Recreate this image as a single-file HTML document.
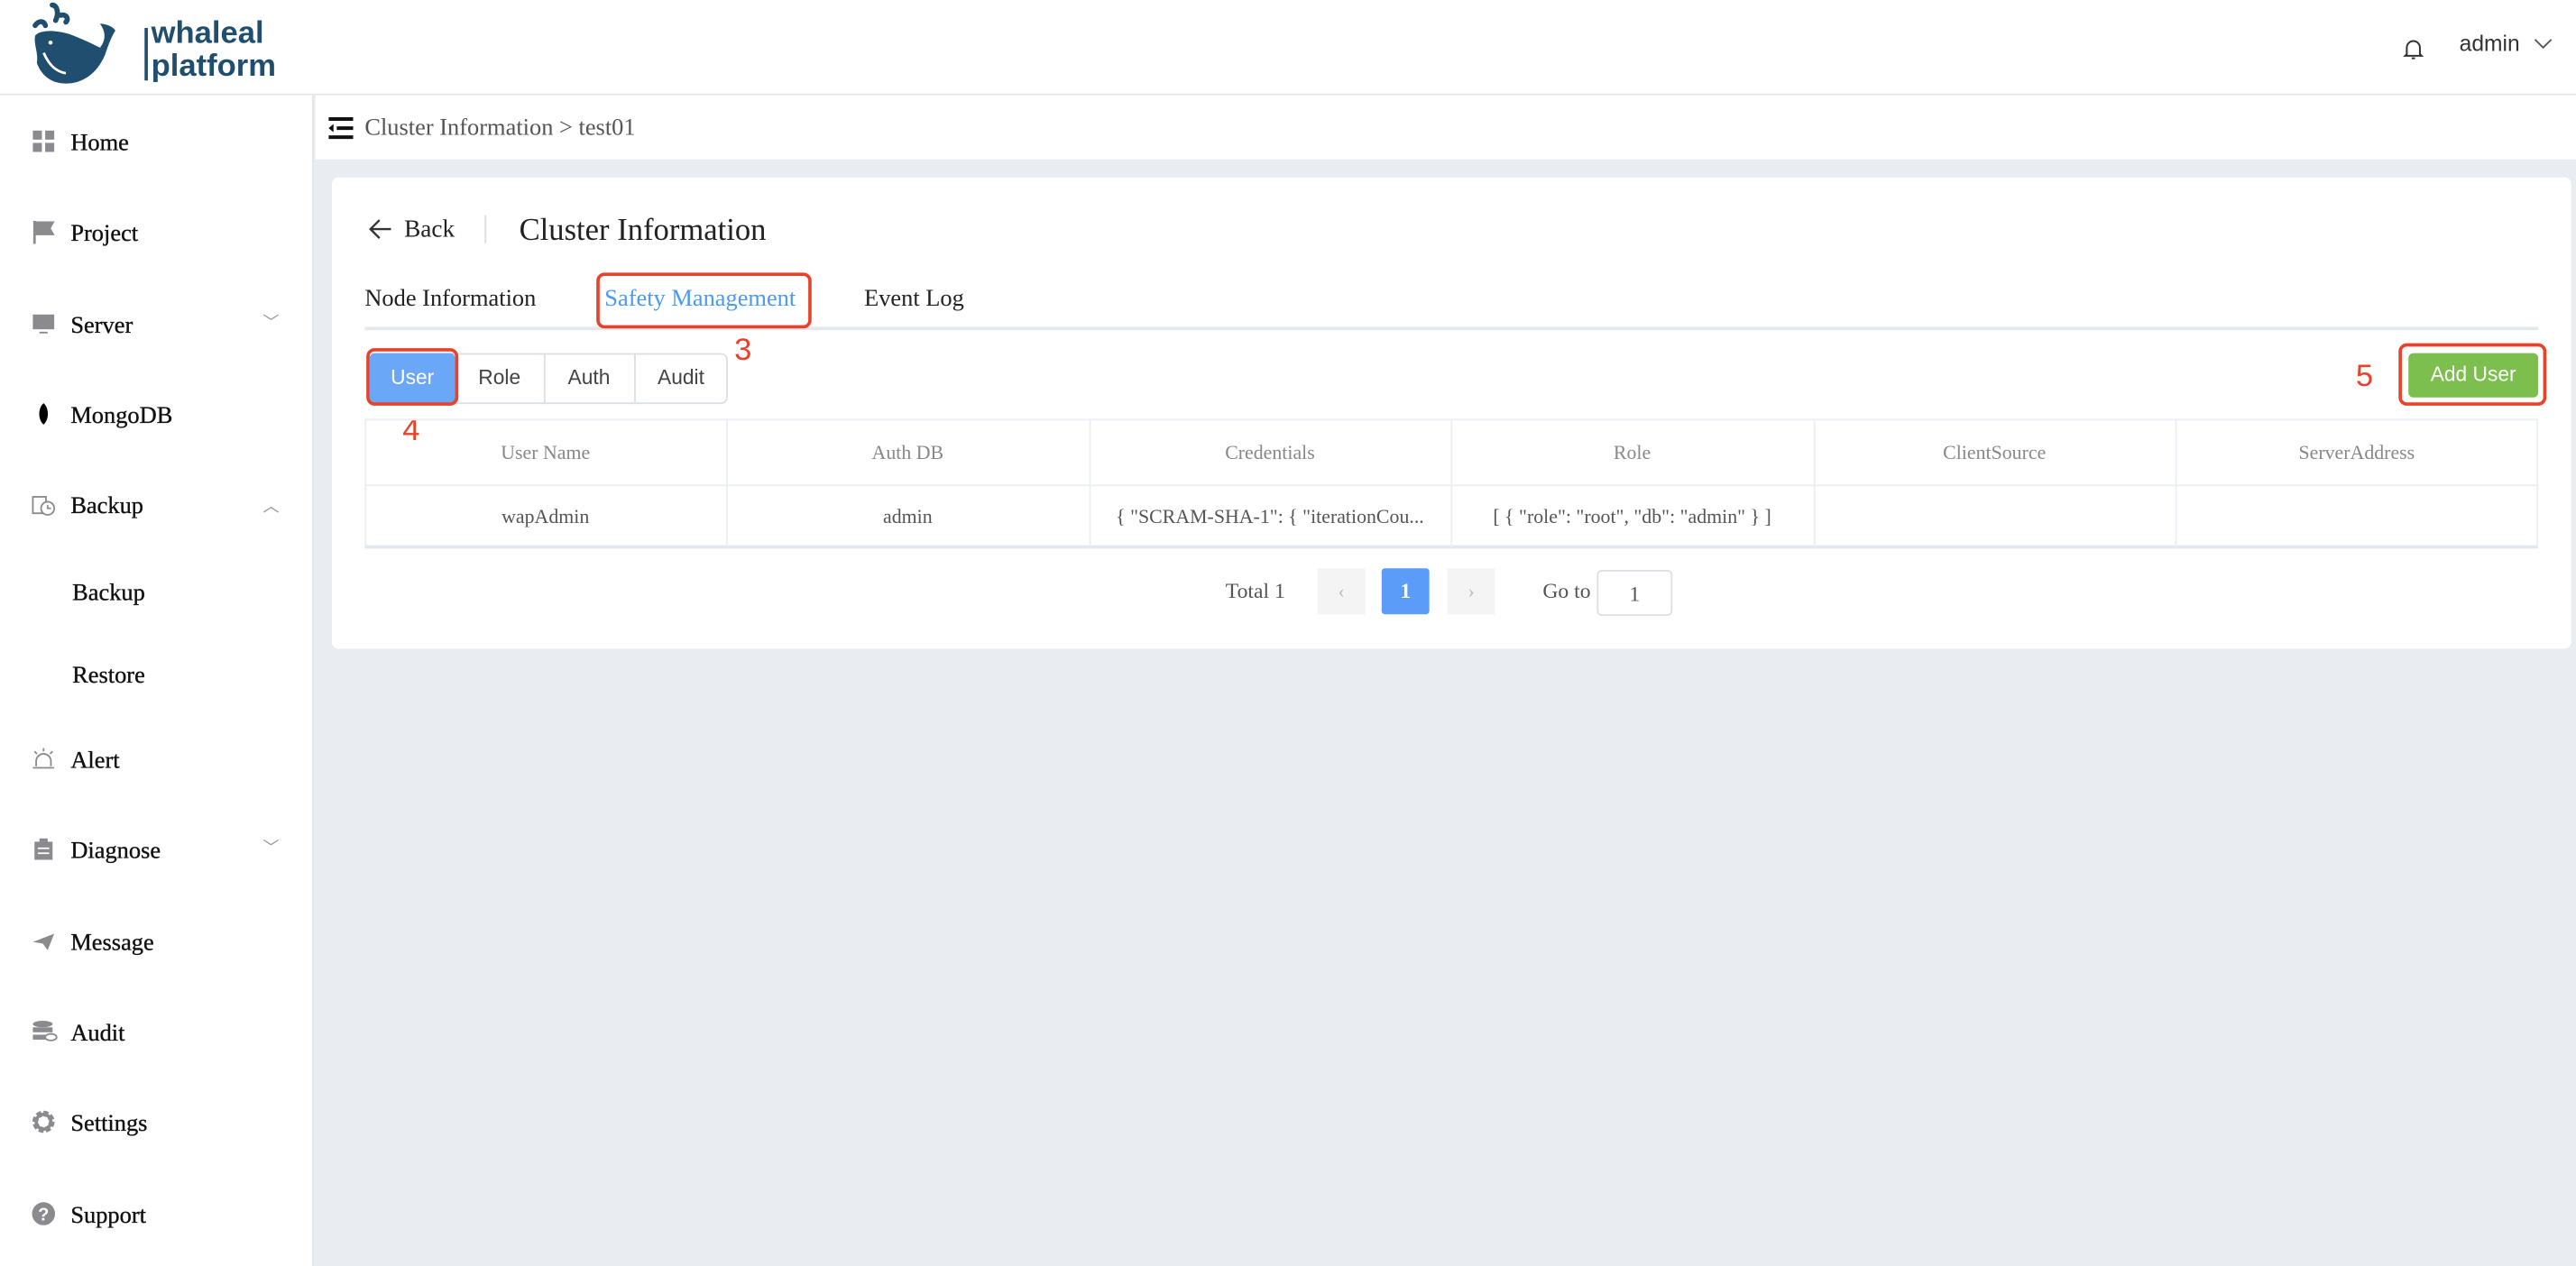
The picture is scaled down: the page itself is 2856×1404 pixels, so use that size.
<!DOCTYPE html>
<html><head><meta charset="utf-8"><style>
*{margin:0;padding:0;box-sizing:border-box}
html,body{width:2856px;height:1404px;overflow:hidden;background:#e9ecf0}
#w{position:absolute;left:0;top:0;width:1568px;height:771px;transform:scale(1.82143);transform-origin:0 0;font-family:"Liberation Serif",serif;color:#222}
.a{position:absolute;white-space:nowrap}
.side{position:absolute;left:0;top:58px;width:191px;height:713px;background:#fff;border-right:1px solid #e4e4e4}
.mi{position:absolute;left:43px;font-size:14.5px;color:#111;transform:translateY(-50%);margin-top:2px;-webkit-text-stroke:0.2px #111}
.ic{position:absolute;left:19px;width:15px;height:15px;transform:translateY(-50%)}
.chev{position:absolute;left:160px;font-size:10px;color:#999;transform:translateY(-50%)}
.sb{font-family:"Liberation Sans",sans-serif}
.cell{position:absolute;text-align:center;font-size:12px;transform:translateY(-50%);margin-top:1px}
.red{position:absolute;border:2.5px solid #e8432a;border-radius:5px}
.num{position:absolute;color:#e8432a;font-family:"Liberation Sans",sans-serif;font-size:19px}
</style></head><body><div id="w">
<!-- header -->
<div class="a" style="left:0;top:0;width:1568px;height:58px;background:#fff;border-bottom:1px solid #e6e6e6"></div>
<svg class="a" style="left:17px;top:1px" width="68" height="54" viewBox="0 0 65 52">
<path d="M4 14c2-3 5-3 6 0M14 2c3 0 4 5 2 9M19 8c3-1 5 2 3 4" stroke="#1f4e6e" stroke-width="3" fill="none" stroke-linecap="round"/>
<path d="M4 20c2-3 10-4 20-1 8 3 14 6 18 8 4-5 3-10 0-14 4 0 8 2 9 4-2 3-4 8-6 14-5 12-14 17-23 17-8 0-14-4-17-12C6 30 3 25 4 20z" fill="#1f4e6e"/>
<path d="M9 30c3 7 7 11 13 12" stroke="#fff" stroke-width="1.5" fill="none"/><circle cx="13" cy="24" r="1.2" fill="#fff"/>
</svg>
<div class="a" style="left:88px;top:17px;width:1.5px;height:32px;background:#1f4e6e"></div>
<div class="a sb" style="left:92px;top:11px;font-size:19px;font-weight:bold;color:#1f4e6e;line-height:20px">whaleal<br>platform</div>
<svg class="a" style="left:1462px;top:22px" width="14" height="15" viewBox="0 0 14 15"><path d="M3 11V7a4 4 0 018 0v4l1 1H2zM6 13.5h2" stroke="#333" stroke-width="1.1" fill="none"/></svg>
<div class="a sb" style="left:1497px;top:19px;font-size:13.5px;color:#333">admin</div>
<svg class="a" style="left:1542px;top:23px" width="12" height="8"><path d="M1 1l5 5 5-5" stroke="#555" fill="none"/></svg>
<!-- sidebar -->
<div class="side"></div>
<div class="ic" style="top:86px"><svg width="15" height="15"><rect x="1" y="1" width="5.5" height="5.5" fill="#8a8a8f"/><rect x="8.5" y="1" width="5.5" height="5.5" fill="#8a8a8f"/><rect x="1" y="8.5" width="5.5" height="5.5" fill="#8a8a8f"/><rect x="8.5" y="8.5" width="5.5" height="5.5" fill="#8a8a8f"/></svg></div><div class="mi" style="top:86px">Home</div>
<div class="ic" style="top:141px"><svg width="15" height="15"><path d="M2 1v14M2 2h11l-2 3.5 2 3.5H2" fill="#8a8a8f" stroke="#8a8a8f" stroke-width="1.5"/></svg></div><div class="mi" style="top:141px">Project</div>
<div class="ic" style="top:197px"><svg width="15" height="15"><rect x="1" y="2" width="13" height="9" fill="#8a8a8f"/><path d="M5 13h5" stroke="#8a8a8f"/></svg></div><div class="mi" style="top:197px">Server</div><div class="chev" style="top:195px">﹀</div>
<div class="ic" style="top:252px"><svg width="15" height="15"><path d="M7.5 1C11 4 11 11 7.5 14 4 11 4 4 7.5 1z" fill="#000"/></svg></div><div class="mi" style="top:252px">MongoDB</div>
<div class="ic" style="top:307px"><svg width="15" height="15"><rect x="1" y="3" width="8" height="10" fill="none" stroke="#8a8a8f"/><circle cx="10" cy="10" r="4" fill="#fff" stroke="#8a8a8f"/><path d="M10 8v2h2" stroke="#8a8a8f" fill="none"/></svg></div><div class="mi" style="top:307px">Backup</div><div class="chev" style="top:307px">︿</div>
<div class="mi" style="top:360px;left:44px">Backup</div>
<div class="mi" style="top:410px;left:44px">Restore</div>
<div class="ic" style="top:462px"><svg width="15" height="15"><path d="M3 12V9a4.5 4.5 0 019 0v3M1 13h13M7.5 1v2M2 3l1.5 1.5M13 3l-1.5 1.5" stroke="#8a8a8f" fill="none"/></svg></div><div class="mi" style="top:462px">Alert</div>
<div class="ic" style="top:517px"><svg width="15" height="15"><rect x="2" y="3" width="11" height="11" fill="#8a8a8f"/><rect x="5" y="1" width="5" height="3" fill="#8a8a8f"/><path d="M4 7h7M4 10h7" stroke="#fff"/></svg></div><div class="mi" style="top:517px">Diagnose</div><div class="chev" style="top:515px">﹀</div>
<div class="ic" style="top:573px"><svg width="15" height="15"><path d="M1 8L14 3l-4 10-3-4z" fill="#8a8a8f"/></svg></div><div class="mi" style="top:573px">Message</div>
<div class="ic" style="top:628px"><svg width="16" height="15"><ellipse cx="7" cy="3" rx="6" ry="2" fill="#8a8a8f"/><rect x="1" y="5" width="12" height="3" fill="#8a8a8f"/><rect x="1" y="9.5" width="8" height="3" fill="#8a8a8f"/><ellipse cx="12" cy="11" rx="3.5" ry="2" fill="#fff" stroke="#8a8a8f"/></svg></div><div class="mi" style="top:628px">Audit</div>
<div class="ic" style="top:683px"><svg width="15" height="15"><circle cx="7.5" cy="7.5" r="5" fill="none" stroke="#8a8a8f" stroke-width="3.5" stroke-dasharray="2.6 1.3"/><circle cx="7.5" cy="7.5" r="4.5" fill="none" stroke="#8a8a8f" stroke-width="2"/></svg></div><div class="mi" style="top:683px">Settings</div>
<div class="ic" style="top:739px"><svg width="15" height="15"><circle cx="7.5" cy="7.5" r="7" fill="#8a8a8f"/><text x="7.5" y="11.5" font-size="11" fill="#fff" text-anchor="middle" font-family="Liberation Sans" font-weight="bold">?</text></svg></div><div class="mi" style="top:739px">Support</div>
<!-- breadcrumb -->
<div class="a" style="left:192px;top:58px;width:1376px;height:39px;background:#fff"></div>
<svg class="a" style="left:200px;top:71px" width="15" height="14"><path d="M0 1.5h15M5 7h10M0 12.5h15" stroke="#111" stroke-width="2.2"/><path d="M0 7l3-2.5v5z" fill="#111"/></svg>
<div class="a" style="left:222px;top:70px;font-size:14.5px;color:#555">Cluster Information &gt; test01</div>
<!-- card -->
<div class="a" style="left:202px;top:108px;width:1363px;height:287px;background:#fff;border-radius:4px"></div>
<svg class="a" style="left:224px;top:133px" width="15" height="13"><path d="M14 6.5H1.5M7 1L1.5 6.5 7 12" stroke="#333" stroke-width="1.3" fill="none"/></svg>
<div class="a" style="left:246px;top:132px;font-size:15px;color:#222">Back</div>
<div class="a" style="left:295px;top:131px;width:1px;height:17px;background:#ddd"></div>
<div class="a" style="left:316px;top:130px;font-size:19px;color:#222">Cluster Information</div>
<div class="a" style="left:222px;top:174px;font-size:14.5px">Node Information</div>
<div class="a" style="left:368px;top:174px;font-size:14.5px;color:#4a9af5">Safety Management</div>
<div class="a" style="left:526px;top:174px;font-size:14.5px">Event Log</div>
<div class="a" style="left:222px;top:199px;width:1323px;height:2px;background:#e4e7ed"></div>
<div class="red" style="left:363px;top:166px;width:131px;height:34px"></div>
<div class="num" style="left:447px;top:203px">3</div>
<!-- button group -->
<div class="a" style="left:225px;top:215px;width:218px;height:31px;border:1px solid #dcdfe6;border-radius:4px"></div>
<div class="a sb" style="left:225px;top:215px;width:52px;height:31px;background:#6aa8f7;color:#fff;font-size:12.5px;text-align:center;line-height:31px;border-radius:3px">User</div>
<div class="a sb" style="left:277px;top:215px;width:54px;height:31px;font-size:12.5px;text-align:center;line-height:31px;color:#444">Role</div>
<div class="a" style="left:331px;top:215px;width:1px;height:31px;background:#dcdfe6"></div>
<div class="a sb" style="left:331px;top:215px;width:55px;height:31px;font-size:12.5px;text-align:center;line-height:31px;color:#444">Auth</div>
<div class="a" style="left:386px;top:215px;width:1px;height:31px;background:#dcdfe6"></div>
<div class="a sb" style="left:386px;top:215px;width:57px;height:31px;font-size:12.5px;text-align:center;line-height:31px;color:#444">Audit</div>
<div class="red" style="left:223px;top:212px;width:56px;height:35px"></div>
<div class="num" style="left:245px;top:252px">4</div>
<div class="num" style="left:1434px;top:219px">5</div>
<div class="a sb" style="left:1466px;top:215px;width:79px;height:27px;background:#7dbf4e;color:#fff;font-size:12.5px;text-align:center;line-height:27px;border-radius:3px">Add User</div>
<div class="red" style="left:1460px;top:209px;width:90px;height:38px"></div>
<!-- table -->
<div class="a" style="left:222px;top:255px;width:1323px;height:79px;border:1px solid #ebeef5;border-bottom:2px solid #e4e7ed"></div>
<div class="a" style="left:222px;top:295px;width:1323px;height:1px;background:#ebeef5"></div>
<div class="a" style="left:442px;top:255px;width:1px;height:78px;background:#ebeef5"></div>
<div class="a" style="left:663px;top:255px;width:1px;height:78px;background:#ebeef5"></div>
<div class="a" style="left:883px;top:255px;width:1px;height:78px;background:#ebeef5"></div>
<div class="a" style="left:1104px;top:255px;width:1px;height:78px;background:#ebeef5"></div>
<div class="a" style="left:1324px;top:255px;width:1px;height:78px;background:#ebeef5"></div>
<div class="cell" style="left:222px;width:220px;top:275px;color:#888">User Name</div>
<div class="cell" style="left:442px;width:221px;top:275px;color:#888">Auth DB</div>
<div class="cell" style="left:663px;width:220px;top:275px;color:#888">Credentials</div>
<div class="cell" style="left:883px;width:221px;top:275px;color:#888">Role</div>
<div class="cell" style="left:1104px;width:220px;top:275px;color:#888">ClientSource</div>
<div class="cell" style="left:1324px;width:221px;top:275px;color:#888">ServerAddress</div>
<div class="cell" style="left:222px;width:220px;top:314px;color:#555">wapAdmin</div>
<div class="cell" style="left:442px;width:221px;top:314px;color:#555">admin</div>
<div class="cell" style="left:663px;width:220px;top:314px;color:#555">{ "SCRAM-SHA-1": { "iterationCou...</div>
<div class="cell" style="left:883px;width:221px;top:314px;color:#555">[ { "role": "root", "db": "admin" } ]</div>
<!-- pagination -->
<div class="a" style="left:746px;top:352px;font-size:13px;color:#555">Total 1</div>
<div class="a" style="left:802px;top:346px;width:29px;height:28px;background:#f4f4f5;color:#bbb;text-align:center;line-height:28px;font-size:12px">‹</div>
<div class="a" style="left:841px;top:346px;width:29px;height:28px;background:#5a9cf8;color:#fff;text-align:center;line-height:28px;font-size:13px;font-weight:bold;border-radius:2px">1</div>
<div class="a" style="left:881px;top:346px;width:29px;height:28px;background:#f4f4f5;color:#bbb;text-align:center;line-height:28px;font-size:12px">›</div>
<div class="a" style="left:939px;top:352px;font-size:13px;color:#555">Go to</div>
<div class="a" style="left:972px;top:347px;width:46px;height:28px;border:1px solid #dcdfe6;border-radius:3px;text-align:center;line-height:28px;font-size:13px;color:#555">1</div>
</div></body></html>
